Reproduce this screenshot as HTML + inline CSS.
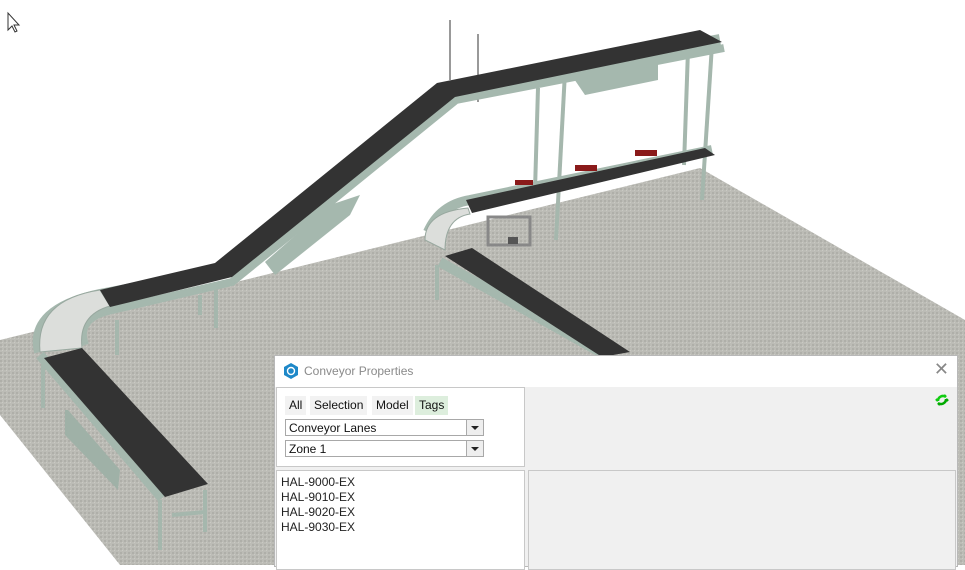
<!DOCTYPE html>
<html><head><meta charset="utf-8"><style>
html,body{margin:0;padding:0;width:965px;height:565px;overflow:hidden;background:#fff;font-family:"Liberation Sans",sans-serif}
#dlg{position:absolute;left:274px;top:355px;width:684px;height:212px;background:#f0f0f0;border:1px solid #b8b8b8;box-sizing:border-box}
.tb{position:absolute;left:0;top:0;right:0;height:31px;background:#fff}
.tt{position:absolute;left:29px;top:8px;font-size:12px;color:#8a8a8a}
.x{position:absolute;right:8px;top:3px;font-size:18px;color:#888}
.p{position:absolute;background:#fff;border:1px solid #c8c8c8;box-sizing:border-box}
.tab{position:absolute;top:8px;height:19px;background:#f2f2f2;font-size:12px;line-height:19px;padding:0 4px;color:#111}
.sel{position:absolute;left:8px;width:199px;height:17px;border:1px solid #a8a8a8;background:#fff;font-size:12px;line-height:16px;padding-left:3px;box-sizing:border-box;color:#111}
.sel b{position:absolute;right:0;top:0;width:16px;height:15px;background:#eee;border-left:1px solid #aaa}
.sel b:after{content:"";position:absolute;left:4px;top:6px;border:4px solid transparent;border-top:4px solid #222}
.list{font-size:12px;line-height:15px;color:#222;padding:4px 0 0 4px}
</style></head><body>
<svg width="965" height="565" style="position:absolute;left:0;top:0">
<defs><pattern id="f" width="4" height="4" patternUnits="userSpaceOnUse"><rect width="4" height="4" fill="#bcbcb6"/><rect width="2" height="2" fill="#afafa9"/><rect x="2" y="2" width="1" height="1" fill="#cacac4"/></pattern></defs>
<polygon points="0,340 700,168 965,320 965,565 120,565 0,415" fill="url(#f)"/>
<path d="M8,13 L8,30 L12,26 L15,32 L17,31 L14,25 L19,25 Z" fill="#fff" stroke="#333" stroke-width="1"/>
<line x1="450" y1="20" x2="450" y2="80" stroke="#333"/><line x1="478" y1="34" x2="478" y2="102" stroke="#333"/>
<g stroke="#a5b7ad" stroke-width="4">
<line x1="43" y1="365" x2="43" y2="408"/><line x1="160" y1="500" x2="160" y2="550"/><line x1="205" y1="490" x2="205" y2="532"/>
<line x1="117" y1="320" x2="117" y2="355"/><line x1="200" y1="295" x2="200" y2="315"/><line x1="216" y1="290" x2="216" y2="328"/>
<line x1="437" y1="265" x2="437" y2="300"/><line x1="538" y1="88" x2="535" y2="190"/><line x1="565" y1="72" x2="556" y2="240"/>
<line x1="688" y1="50" x2="684" y2="165"/><line x1="712" y1="45" x2="702" y2="200"/><line x1="172" y1="515" x2="205" y2="512"/>
</g>
<polygon points="65,410 68,410 120,470 118,490 65,435" fill="#9fb1a7"/>
<polygon points="330,205 360,195 350,215 275,275 265,262" fill="#a5b8ae"/>
<polygon points="568,70 658,55 658,80 585,95" fill="#a5b8ae"/>
<path d="M40,352 Q30,310 100,295 L232,270 L455,90 L720,40" fill="none" stroke="#a5b8ae" stroke-width="12"/>
<path d="M40,355 L162,498" stroke="#a5b8ae" stroke-width="10"/>
<path d="M85,345 Q75,318 112,310 L232,282 L456,100 L724,48" fill="none" stroke="#a5b8ae" stroke-width="8"/>
<path d="M40,352 Q35,300 100,290 L110,306 Q78,315 82,348 Z" fill="#dcdedb" stroke="#98a89f"/>
<polygon points="44,358 82,348 208,484 165,497" fill="#333"/>
<polygon points="100,290 215,263 437,83 700,30 722,42 455,97 232,277 110,307" fill="#333"/>
<path d="M428,232 Q440,205 470,200 L712,150" fill="none" stroke="#a5b8ae" stroke-width="10"/>
<path d="M425,240 Q425,212 468,208 L470,214 Q445,218 445,250 Z" fill="#dcdedb" stroke="#98a89f"/>
<polygon points="466,200 705,148 715,155 472,213" fill="#333"/>
<path d="M440,262 L600,352" stroke="#a5b8ae" stroke-width="10"/>
<polygon points="445,256 472,248 630,352 602,357" fill="#333"/>
<rect x="488" y="217" width="42" height="28" fill="none" stroke="#888" stroke-width="3"/>
<rect x="508" y="237" width="10" height="7" fill="#555"/>
<g fill="#8a1a1a"><rect x="515" y="180" width="18" height="5"/><rect x="575" y="165" width="22" height="6"/><rect x="635" y="150" width="22" height="6"/></g>
</svg>
<div id="dlg">
<div class="tb">
<svg width="14" height="16" style="position:absolute;left:9px;top:7px"><polygon points="7,0 14,4 14,12 7,16 0,12 0,4" fill="#1e88c8"/><circle cx="7" cy="8" r="3.5" fill="none" stroke="#fff" stroke-width="1.4"/></svg>
<div class="tt">Conveyor Properties</div><div class="x">✕</div></div>
<div class="p" style="left:1px;top:31px;width:249px;height:80px">
<div class="tab" style="left:8px">All</div><div class="tab" style="left:33px">Selection</div><div class="tab" style="left:95px">Model</div><div class="tab" style="left:138px;background:#ddeedd">Tags</div>
<div class="sel" style="top:31px">Conveyor Lanes<b></b></div>
<div class="sel" style="top:52px">Zone 1<b></b></div>
</div>
<div class="p list" style="left:1px;top:114px;width:249px;height:100px">HAL-9000-EX<br>HAL-9010-EX<br>HAL-9020-EX<br>HAL-9030-EX</div>
<div class="p" style="left:253px;top:114px;width:428px;height:100px;background:#f0f0f0"></div>
<svg width="14" height="14" style="position:absolute;left:660px;top:37px"><path d="M3,8 A5,5 0 0 1 11,4 L9,2 M3,8 L1,6" fill="none" stroke="#1c1" stroke-width="2.5"/><path d="M11,6 A5,5 0 0 1 3,10 L5,12 M11,6 L13,8" fill="none" stroke="#0a0" stroke-width="2.5"/></svg>
</div>
</body></html>
